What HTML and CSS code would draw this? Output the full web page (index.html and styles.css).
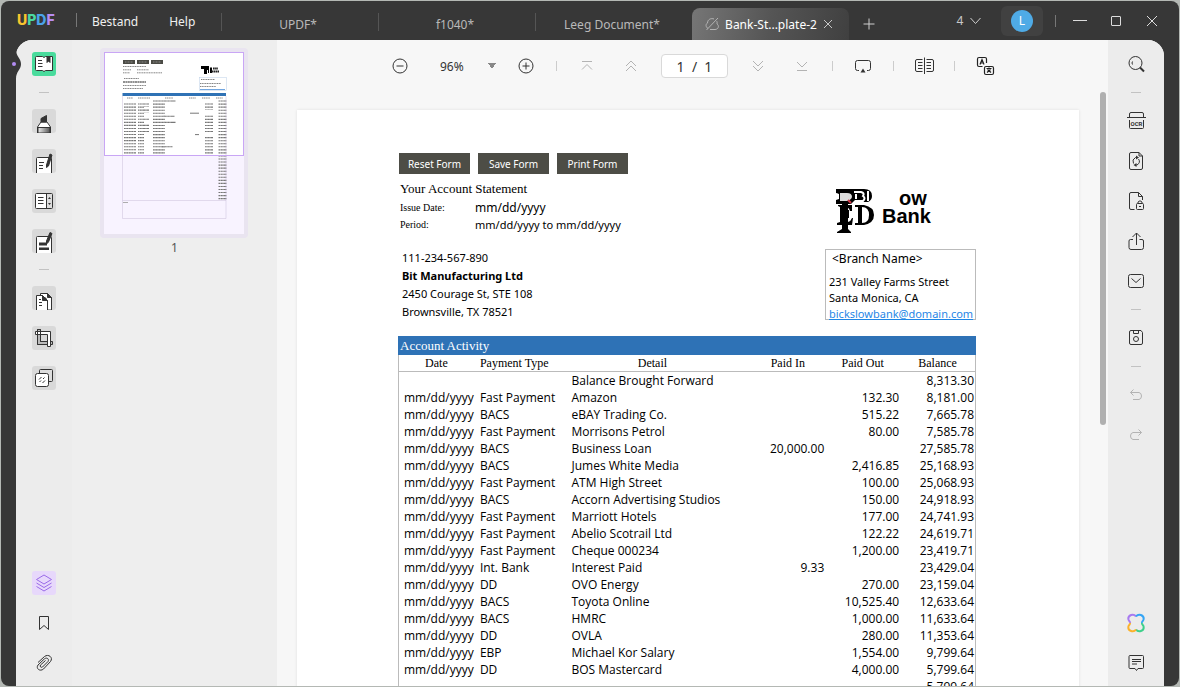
FILE: index.html
```html
<!DOCTYPE html>
<html lang="nl">
<head>
    <meta charset="UTF-8">
    <meta name="viewport" content="width=device-width, initial-scale=1.0">
    <title>UPDF - Bank-Statement-Template-2</title>
    <link rel="stylesheet" href="styles.css">
</head>
<body>
<div class="window">
    <header class="titlebar">
        <div class="logo"><span class="logo-u">U</span><span class="logo-p">P</span><span class="logo-d">D</span><span class="logo-f">F</span></div>
        <nav class="menu">
            <button type="button">Bestand</button>
            <button type="button">Help</button>
        </nav>
        <div class="tabs">
            <button type="button" class="tab">UPDF*</button>
            <button type="button" class="tab">f1040*</button>
            <button type="button" class="tab">Leeg Document*</button>
            <div class="tab active">
                <svg width="14" height="14" viewBox="0 0 14 14" fill="none" stroke="#b4b4b4"><path d="M3 11.500C.5 10 .5 7 2.500 6C2.500 2.500 6 .800 9 2M5 12.500H10C13.500 12.500 14.500 8.500 12 7C12.300 5.500 12 4.500 11.500 4M1.500 13L13 1"/></svg>
                <span>Bank-St...plate-2</span>
                <button type="button" class="tab-close" aria-label="Close tab"><svg width="10" height="10" viewBox="0 0 10 10" stroke="#c8c8c8"><path d="M1 1L9 9M9 1L1 9"/></svg></button>
            </div>
            <button type="button" class="tab-add" aria-label="New tab"><svg width="12" height="12" viewBox="0 0 12 12" stroke="#cfcfcf"><path d="M6 .5V11.500M.5 6H11.500"/></svg></button>
        </div>
        <div class="window-tools">
            <button type="button" class="tab-count">4 <svg width="11" height="8" viewBox="0 0 11 8" fill="none" stroke="#cfcfcf"><path d="M.5 1L5.500 6.500L10.500 1"/></svg></button>
            <button type="button" class="account"><span class="avatar">L</span></button>
            <span class="bar"></span>
            <button type="button" aria-label="Minimize"><svg width="14" height="14" viewBox="0 0 14 14" stroke="#dcdcdc"><path d="M0 6.500H14"/></svg></button>
            <button type="button" aria-label="Maximize"><svg width="14" height="14" viewBox="0 0 14 14" fill="none" stroke="#dcdcdc"><rect x="2.500" y="2.500" width="9" height="9" rx=".5"/></svg></button>
            <button type="button" aria-label="Close"><svg width="14" height="14" viewBox="0 0 14 14" stroke="#dcdcdc"><path d="M2 2L12 12M12 2L2 12"/></svg></button>
        </div>
    </header>

    <div class="workspace">
        <!-- Left tool rail -->
        <aside class="rail rail-left">
            <svg class="notch" width="14" height="30" viewBox="0 0 14 30"><path d="M6 0C6 8 11 9 11 15C11 21 6 22 6 30H0V0Z" fill="#373737"/><circle cx="4" cy="15" r="2" fill="#b38cf2"/></svg>
            <button type="button" class="tool current" aria-label="Reader">
                <svg viewBox="0 0 24 24"><path class="page" d="M4.500 4.500H10.500L12 5.500L13.500 4.500H20.500V18.500H13.500L12 19.500L10.500 18.500H4.500Q3.500 18.500 3.500 17.500V5.500Q3.500 4.500 4.500 4.500Z"/><path d="M6 8.500H10M6 11.500H10.500M6 14.500H10.500"/><path class="ink" d="M15 4.500H18V10.500L16.500 9L15 10.500Z"/></svg>
            </button>
            <span class="divider"></span>
            <button type="button" class="tool" aria-label="Comment">
                <svg viewBox="0 0 24 24"><defs><linearGradient id="tip"><stop offset="0" stop-color="#eee"/><stop offset="1" stop-color="#555"/></linearGradient></defs><path class="page" d="M9 13H15L18.500 18V24H5.500V18Z"/><path class="tip" d="M6 18.500H18V24H6Z"/><path class="ink" d="M9 13V9.500L14.500 6.500V13Z"/></svg>
            </button>
            <button type="button" class="tool" aria-label="Edit">
                <svg viewBox="0 0 24 24"><path class="page" d="M4.500 24V9.500Q4.500 8.500 5.500 8.500H18.500Q19.500 8.500 19.500 9.500V24"/><path d="M7 13.500H12M7 16.500H11M7 19.500H11"/><path class="ink" d="M18 5L20 6L16.500 17L14.500 18.500L14.500 16Z"/></svg>
            </button>
            <button type="button" class="tool" aria-label="Form">
                <svg viewBox="0 0 24 24"><rect class="page" x="3.500" y="4.500" width="17" height="15" rx="1"/><path d="M15 5H20V19H15Z" fill="#ddd" stroke="none"/><path d="M14.500 4.500V19.500M6 8.500H11.500M6 11.500H11.500M6 14.500H11.500"/><path class="fill" d="M16 10L17.500 8L19 10ZM16 14L17.500 16L19 14Z"/></svg>
            </button>
            <button type="button" class="tool" aria-label="Redact">
                <svg viewBox="0 0 24 24"><path class="page" d="M4.500 24V8.500Q4.500 7.500 5.500 7.500H18.500Q19.500 7.500 19.500 8.500V24"/><path class="fill" d="M7 13.500H15V16.500H7ZM7 18.500H17V21H7Z"/><path class="ink" d="M18 3.500L20 4.500L16.500 13L14.500 15L14.500 12Z"/></svg>
            </button>
            <span class="divider"></span>
            <button type="button" class="tool" aria-label="Organize pages">
                <svg viewBox="0 0 24 24"><path class="page" d="M8.500 12V7.500H15.500L19.500 11.500V24H14V12Z"/><path class="page" d="M4.500 24V9.500H10.500L15.500 14.500V24"/><path class="ink" d="M10.500 9.500V14.500H15.500ZM15.500 7.500V11.500H19.500Z"/><path d="M7 13.500H9M7 16.500H10M7 19.500H10"/></svg>
            </button>
            <button type="button" class="tool" aria-label="Crop">
                <svg viewBox="0 0 24 24"><path d="M5.500 3.500H8.500V15.500H20.500V18.500H5.500Z" fill="#bbb"/><path class="page" d="M3.500 5.500H18.500V20.500H15.500V8.500H3.500Z"/><path d="M5.500 3.500H8.500V15.500H15.500M5.500 3.500V18.500H15.500"/></svg>
            </button>
            <button type="button" class="tool" aria-label="Watermark">
                <svg viewBox="0 0 24 24"><rect x="7.500" y="3.500" width="13" height="12" rx="1" fill="#ddd"/><rect class="page" x="3.500" y="7.500" width="13" height="13" rx="2"/><path d="M7 13.500L9.500 11M7.500 16L9 14.500M11 13L12.500 11.500M10.500 17L13 14.500"/></svg>
            </button>
            <button type="button" class="tool layers push" aria-label="Layers">
                <svg viewBox="0 0 24 24"><path d="M12 4L19.500 8.500L12 13L4.500 8.500ZM4.500 12L12 16.500L19.500 12M4.500 15.500L12 20L19.500 15.500"/></svg>
            </button>
            <button type="button" class="tool plain" aria-label="Bookmarks">
                <svg viewBox="0 0 24 24"><path d="M7.500 5.500H16.500V18.500L12 14.500L7.500 18.500Z"/></svg>
            </button>
            <button type="button" class="tool plain" aria-label="Attachments">
                <svg viewBox="0 0 24 24"><path d="M6 11.500L12.500 5.500C16.500 2.500 21.500 6.500 18.500 10.500L11.500 18C8 21 3.500 17.500 6 14L12.500 7.800C15 6 17.500 8.200 16 10.500L10.500 16C9 17 7.500 15.500 8.500 14L13.500 9.500"/></svg>
            </button>
        </aside>

        <!-- Page thumbnails -->
        <aside class="thumbs">
            <a href="#page-1" class="thumb">
                <svg viewBox="0 0 140 182">
                    <rect width="140" height="182" fill="#f8f3ff"/>
                    <rect width="140" height="104" fill="#fff"/>
                    <path d="M19 10H31M33 10H45M47 10H59" stroke="#4b4b45" stroke-width="4"/>
                    <path d="M21 10H29M35 10H43M49 10H57" stroke="#999" stroke-width=".8" stroke-dasharray="1 .5"/>
                    <g stroke="#777" stroke-width=".9" stroke-dasharray="1.200 .5">
                        <path d="M19 14.500H42M19 17.800H27M33 17.800H45M19 20.800H26M33 20.800H58M20 26.500H35M19 33.500H42M19 36.500H39"/>
                        <path d="M97 27.500H111M96 31.500H117M96 34.500H112"/>
                    </g>
                    <path d="M19 30H42" stroke="#222" stroke-width="1.200" stroke-dasharray="2 .4"/>
                    <path d="M97 14H105V18H103V22H100V17H97ZM104 17H105V21H104ZM106 15.500H108V21H106Z"/>
                    <path d="M109 16.500H114M107.500 19.500H115" stroke="#222" stroke-width="2" stroke-dasharray="1.700 .4"/>
                    <rect x="95.500" y="25.500" width="27" height="13" fill="none" stroke="#bcd0e8" stroke-width=".5"/>
                    <path d="M96 37.500H121" stroke="#72a6e0"/>
                    <path d="M18.500 42.500H122" stroke="#2f72b5" stroke-width="3"/>
                    <path d="M23 46H29M34 46H46M61 46H69M85 46H92M98 46H106M112 46H119" stroke="#888" stroke-dasharray="1.300 .5"/>
                    <!-- one dash per table row -->
                    <g fill="none" stroke="#777" stroke-dasharray="1.100 1.950">
                        <path d="M26 51.500V104" stroke-width="12"/>
                        <path d="M37 51.500V104" stroke-width="6"/>
                        <path d="M42.500 51.500V55M42.500 57.600V61M42.500 66.750V68M42.500 72.850V82" stroke-width="5"/>
                        <path d="M55 48.500V104" stroke-width="12"/>
                        <path d="M66 48.500V51M65 63.750V66M66 69.850V72M63 94.250V97" stroke-width="11"/>
                        <path d="M105 51.500V58M105 63.750V82M105 85.100V104" stroke-width="8"/>
                        <path d="M118.500 48.500V149" stroke-width="8"/>
                    </g>
                    <path d="M86 61.200H95M91 82.600H95" stroke="#777"/>
                    <g stroke="#fff" stroke-width=".6" opacity=".7">
                        <path d="M22 51V104M24.500 51V104M27 51V104M29.500 51V104M35.500 51V104M38 51V104M42 51V104M51 48V104M54 48V104M57 48V104M60 48V104M63 48V104M66 48V104M103 51V104M106 51V104M116.500 48V149M119 48V149"/>
                    </g>
                    <path d="M18.500 44V166.500H122V44M18.500 148.500H122" fill="none" stroke="#cbbfd8" stroke-width=".5"/>
                    <path d="M19 150.500H24" stroke="#999" stroke-width=".8"/>
                    <rect x=".5" y=".5" width="139" height="103" fill="none" stroke="#c9a6f5"/>
                </svg>
            </a>
            <span class="thumb-number">1</span>
        </aside>

        <main class="viewer">
            <div class="toolbar">
                <button type="button" aria-label="Zoom out"><svg viewBox="0 0 24 24"><circle cx="12" cy="12" r="7"/><path d="M8.500 12H15.500"/></svg></button>
                <select class="zoom" aria-label="Zoom"><option>96%</option><option>100%</option></select>
                <button type="button" aria-label="Zoom in"><svg viewBox="0 0 24 24"><circle cx="12" cy="12" r="7"/><path d="M8.500 12H15.500M12 8.500V15.500"/></svg></button>
                <span class="sep"></span>
                <div class="page-nav">
                    <button type="button" class="faded" aria-label="First page"><svg viewBox="0 0 24 24"><path d="M7 7.500H17M7 15.500L12 10.500L17 15.500"/></svg></button>
                    <button type="button" class="faded" aria-label="Previous page"><svg viewBox="0 0 24 24"><path d="M7 12L12 7L17 12M7 17L12 12L17 17"/></svg></button>
                </div>
                <input class="page-input" type="text" value="1  /  1" aria-label="Page">
                <div class="page-nav">
                    <button type="button" class="faded" aria-label="Next page"><svg viewBox="0 0 24 24"><path d="M7 7L12 12L17 7M7 12L12 17L17 12"/></svg></button>
                    <button type="button" class="faded" aria-label="Last page"><svg viewBox="0 0 24 24"><path d="M7 8L12 13L17 8M7 16.500H17"/></svg></button>
                </div>
                <span class="sep"></span>
                <button type="button" aria-label="Slideshow"><svg viewBox="0 0 24 24"><path d="M8 16.500H6.500Q4.500 16.500 4.500 14.500V8.500Q4.500 6.500 6.500 6.500H17.500Q19.500 6.500 19.500 8.500V14.500Q19.500 16.500 17.500 16.500H16"/><path class="fill" d="M12 14.500L14.500 18.500H9.500Z"/></svg></button>
                <span class="sep"></span>
                <button type="button" aria-label="Page display"><svg viewBox="0 0 24 24"><path d="M10.500 5.500H5Q3.500 5.500 3.500 7V16Q3.500 17.500 5 17.500H10.500M14.500 5.500H20Q21.500 5.500 21.500 7V16Q21.500 17.500 20 17.500H14.500M12.500 3.500V20M6 8.500H10.500M6 11.500H10.500M6 14.500H10.500M14.500 8.500H19M14.500 11.500H19M14.500 14.500H19"/></svg></button>
                <span class="sep"></span>
                <button type="button" aria-label="Translate"><svg viewBox="0 0 24 24" class="bold"><path d="M9.500 12.500H6Q4.500 12.500 4.500 11V5Q4.500 3.500 6 3.500H12Q13.500 3.500 13.500 5V9"/><rect x="11.500" y="12.500" width="9" height="8" rx="1.500"/><path d="M7 10.500L9 5.500L11 10.500M7.500 9H10.500M13.500 14.500H18.500M16 13.500V14.500M14.500 15.500L18 18.500M17.500 15.500L14 18.500"/></svg></button>
            </div>

            <div class="scroller">
                <span class="scroll-thumb"></span>
                <article class="sheet" id="page-1">
                    <div class="statement-head">
                        <div class="customer">
                            <div class="form-buttons">
                                <button type="button">Reset Form</button>
                                <button type="button">Save Form</button>
                                <button type="button">Print Form</button>
                            </div>
                            <h1>Your Account Statement</h1>
                            <dl>
                                <dt>Issue Date:</dt><dd class="issue">mm/dd/yyyy</dd>
                                <dt>Period:</dt><dd>mm/dd/yyyy to mm/dd/yyyy</dd>
                            </dl>
                            <address>
                                111-234-567-890<br>
                                <b>Bit Manufacturing Ltd</b><br>
                                2450 Courage St, STE 108<br>
                                Brownsville, TX 78521
                            </address>
                        </div>
                        <div class="bank">
                            <div class="bank-logo">
                                <svg width="42" height="48" viewBox="0 0 42 48"><path d="M1 2H29Q37 2 37 9Q37 13 33 15H25V13H20L16 17H1V13L4 12V7Q2 6 1 6Z"/><path d="M5 6H12Q17 6 17 10Q16 13 12 14H5Z" fill="#ddd"/><path d="M19 5H26Q30 6 28 9Q31 11 28 14H20M21 7V12M33 4V14" fill="none" stroke="#fff" stroke-width="2"/><path d="M13 13L16 16" stroke="#d33a4a" stroke-width="2"/><path d="M7 16H13V42L16 45V46H2V45L7 42ZM3 18H17V24H15Q14 20 10 20H8V26H12V23H14V31H12V28H8V35H13Q16 34 17 31H18L17 38H2V36L5 35V20L3 19Z"/><path fill-rule="evenodd" d="M20 18H29Q39 20 39 28Q39 36 29 38H20V36H23V20H20ZM27 20V36Q34 36 34 28Q34 20 27 20Z"/></svg>
                                <div class="bank-name"><span>ow</span><br>Bank</div>
                            </div>
                            <div class="branch">
                                <p class="branch-name">&lt;Branch Name&gt;</p>
                                <p>231 Valley Farms Street</p>
                                <p>Santa Monica, CA</p>
                                <p><a href="mailto:bickslowbank@domain.com">bickslowbank@domain.com</a></p>
                            </div>
                        </div>
                    </div>

                    <table>
                        <caption>Account Activity</caption>
                        <colgroup><col class="c-date"><col class="c-type"><col class="c-detail"><col class="c-in"><col class="c-out"><col class="c-balance"></colgroup>
                        <thead>
                            <tr><th>Date</th><th>Payment Type</th><th>Detail</th><th>Paid In</th><th>Paid Out</th><th>Balance</th></tr>
                        </thead>
                        <tbody>
                            <tr><td></td><td></td><td>Balance Brought Forward</td><td></td><td></td><td>8,313.30</td></tr>
                            <tr><td>mm/dd/yyyy</td><td>Fast Payment</td><td>Amazon</td><td></td><td>132.30</td><td>8,181.00</td></tr>
                            <tr><td>mm/dd/yyyy</td><td>BACS</td><td>eBAY Trading Co.</td><td></td><td>515.22</td><td>7,665.78</td></tr>
                            <tr><td>mm/dd/yyyy</td><td>Fast Payment</td><td>Morrisons Petrol</td><td></td><td>80.00</td><td>7,585.78</td></tr>
                            <tr><td>mm/dd/yyyy</td><td>BACS</td><td>Business Loan</td><td>20,000.00</td><td></td><td>27,585.78</td></tr>
                            <tr><td>mm/dd/yyyy</td><td>BACS</td><td>Jumes White Media</td><td></td><td>2,416.85</td><td>25,168.93</td></tr>
                            <tr><td>mm/dd/yyyy</td><td>Fast Payment</td><td>ATM High Street</td><td></td><td>100.00</td><td>25,068.93</td></tr>
                            <tr><td>mm/dd/yyyy</td><td>BACS</td><td>Accorn Advertising Studios</td><td></td><td>150.00</td><td>24,918.93</td></tr>
                            <tr><td>mm/dd/yyyy</td><td>Fast Payment</td><td>Marriott Hotels</td><td></td><td>177.00</td><td>24,741.93</td></tr>
                            <tr><td>mm/dd/yyyy</td><td>Fast Payment</td><td>Abelio Scotrail Ltd</td><td></td><td>122.22</td><td>24,619.71</td></tr>
                            <tr><td>mm/dd/yyyy</td><td>Fast Payment</td><td>Cheque 000234</td><td></td><td>1,200.00</td><td>23,419.71</td></tr>
                            <tr><td>mm/dd/yyyy</td><td>Int. Bank</td><td>Interest Paid</td><td>9.33</td><td></td><td>23,429.04</td></tr>
                            <tr><td>mm/dd/yyyy</td><td>DD</td><td>OVO Energy</td><td></td><td>270.00</td><td>23,159.04</td></tr>
                            <tr><td>mm/dd/yyyy</td><td>BACS</td><td>Toyota Online</td><td></td><td>10,525.40</td><td>12,633.64</td></tr>
                            <tr><td>mm/dd/yyyy</td><td>BACS</td><td>HMRC</td><td></td><td>1,000.00</td><td>11,633.64</td></tr>
                            <tr><td>mm/dd/yyyy</td><td>DD</td><td>OVLA</td><td></td><td>280.00</td><td>11,353.64</td></tr>
                            <tr><td>mm/dd/yyyy</td><td>EBP</td><td>Michael Kor Salary</td><td></td><td>1,554.00</td><td>9,799.64</td></tr>
                            <tr><td>mm/dd/yyyy</td><td>DD</td><td>BOS Mastercard</td><td></td><td>4,000.00</td><td>5,799.64</td></tr>
                            <tr><td></td><td></td><td></td><td></td><td></td><td>5,799.64</td></tr>
                        </tbody>
                    </table>
                </article>
            </div>
        </main>

        <!-- Right tool rail -->
        <aside class="rail rail-right">
            <button type="button" class="tool plain" aria-label="Search">
                <svg viewBox="0 0 24 24"><circle cx="11.500" cy="11" r="6.500"/><path d="M8.500 9.500Q7.500 11 8.500 12.500"/><path d="M16 15.500L20 19.500" stroke-width="2"/></svg>
            </button>
            <span class="divider"></span>
            <button type="button" class="tool plain" aria-label="OCR">
                <svg viewBox="0 0 24 24"><path d="M5.500 8V5Q5.500 3.500 7 3.500H18Q19.500 3.500 19.500 5V8M3 8.500H22M5.500 11V18.500Q5.500 19.500 6.500 19.500H18.500Q19.500 19.500 19.500 18.500V11"/><text x="12.500" y="17" text-anchor="middle">OCR</text></svg>
            </button>
            <button type="button" class="tool plain" aria-label="Convert">
                <svg viewBox="0 0 24 24"><path d="M15 3.500H7Q5.500 3.500 5.500 5V19Q5.500 20.500 7 20.500H17Q18.500 20.500 18.500 19V7ZV7H18.500"/><path d="M9.500 14.500Q7.500 10.500 11.500 8.500H13M14.500 10Q17 13.500 13 16H11"/><path class="fill" d="M12 6.500L15 8.500L12 10.500ZM12.500 14L9.500 16L12.500 18Z"/></svg>
            </button>
            <button type="button" class="tool plain" aria-label="Protect">
                <svg viewBox="0 0 24 24"><path d="M10.500 20.500H7Q5.500 20.500 5.500 19V5Q5.500 3.500 7 3.500H14.500L18.500 7.500V11M14.500 3.500V7.500H18.500"/><rect x="12.500" y="14.500" width="7" height="6" rx="1"/><path d="M14 14.500V13Q16 10.500 18 13V14.500M15 17.500H17"/></svg>
            </button>
            <button type="button" class="tool plain" aria-label="Share">
                <svg viewBox="0 0 24 24"><path d="M9 10.500H6.500Q5 10.500 5 12V18.500Q5 20.500 7 20.500H17.500Q19.500 20.500 19.500 18.500V12Q19.500 10.500 18 10.500H15.500M12.500 16V4M8.500 8L12.500 4L16.500 8"/></svg>
            </button>
            <button type="button" class="tool plain" aria-label="Mail">
                <svg viewBox="0 0 24 24"><rect x="4.500" y="5.500" width="15" height="13" rx="2"/><path d="M7.500 9.500L12 13.500L16.500 9.500"/></svg>
            </button>
            <span class="divider"></span>
            <button type="button" class="tool plain" aria-label="Save">
                <svg viewBox="0 0 24 24"><path d="M7 4.500H17L18.500 6.500V17Q18.500 18.500 17 18.500H7Q5.500 18.500 5.500 17V6Q5.500 4.500 7 4.500ZM9.500 4.500V7.500H14.500V4.500"/><circle cx="12" cy="13" r="2.500"/></svg>
            </button>
            <span class="divider"></span>
            <button type="button" class="tool plain faded" aria-label="Undo">
                <svg viewBox="0 0 24 24"><path d="M9.500 6.500L6.500 9.500L9.500 12.500M6.500 9.500H15Q17.500 10 17.500 13Q17.500 16 15 16.500H9"/></svg>
            </button>
            <button type="button" class="tool plain faded" aria-label="Redo">
                <svg viewBox="0 0 24 24"><path d="M14.500 6.500L17.500 9.500L14.500 12.500M17.500 9.500H9Q6.500 10 6.500 13Q6.500 16 9 16.500H15"/></svg>
            </button>
            <button type="button" class="tool plain push" aria-label="UPDF AI">
                <svg viewBox="0 0 24 24" stroke-width="2"><path d="M12 5.500C9.500 2 4 4 4.300 8C4.500 10 6.500 10.500 6 12" stroke="#a87bf0"/><path d="M12 5.500C14.500 2 20 4 19.700 8C19.500 10 17.500 10.500 18 12" stroke="#35a5f5"/><path d="M18 12C17.500 13.500 19.500 14 19.700 16C20 20 14.500 22 12 18.500" stroke="#3ed08b"/><path d="M6 12C6.500 13.500 4.500 14 4.300 16C4 20 9.500 22 12 18.500" stroke="#fbb22c"/></svg>
            </button>
            <button type="button" class="tool plain" aria-label="Comments">
                <svg viewBox="0 0 24 24"><path d="M6 4.500H18.500Q19.500 4.500 19.500 5.500V16.500Q19.500 17.500 18.500 17.500H14L12.500 19.500L11 17.500H6Q5 17.500 5 16.500V5.500Q5 4.500 6 4.500ZM8 8.500H17M8 10.500H17M8 13H13"/></svg>
            </button>
        </aside>
    </div>
</div>
</body>
</html>
```
FILE: styles.css
```css
* {
    box-sizing: border-box;
}

body {
    margin: 0;
    height: 100vh;
    padding: 1px;
    background-color: #b4b8b4;
    font-family: "Noto Sans", "Open Sans", sans-serif;
    font-size: 12px;
    color: #222;
}

button {
    display: flex;
    align-items: center;
    justify-content: center;
    padding: 0;
    border: none;
    background: none;
    font: inherit;
    color: inherit;
    cursor: pointer;
}

.window {
    display: flex;
    flex-direction: column;
    height: 100%;
    background-color: #373737;
    border-radius: 8px;
    overflow: hidden;
}

/* Title bar */
.titlebar {
    display: flex;
    flex: none;
    height: 39px;
    padding-left: 16px;
    color: #f0f0f0;
}

.logo {
    width: 60px;
    height: 24px;
    margin-top: 7px;
    border-right: 1px solid #666;
    border-image: linear-gradient(transparent 25%, #777 25%, #777 75%, transparent 75%) 1;
    font: 800 14px/24px Inter, sans-serif;
}

.logo-u { color: #f7c52f; }
.logo-p { color: #4bd8a0; }
.logo-d { color: #4aa3ea; }
.logo-f { color: #b78cf3; }

.menu {
    display: flex;
    gap: 31px;
    width: 144px;
    padding: 2px 0 0 15px;
}

.tabs {
    display: flex;
    flex: 1;
    align-items: flex-end;
}

.tab {
    display: flex;
    align-items: center;
    justify-content: center;
    gap: 6px;
    width: 157px;
    height: 32px;
    padding-right: 3px;
    background: linear-gradient(#555, #555) left 5px / 1px 18px no-repeat;
    color: #b9b9b9;
}

.tab.active {
    border-radius: 8px 8px 0 0;
    background: linear-gradient(100deg, #767676, #555 50%, #404040);
    color: #fff;
}

.tab-close {
    width: 10px;
    height: 10px;
}

.tab-add {
    width: 40px;
    height: 32px;
}

.window-tools {
    display: flex;
    align-items: center;
    padding-right: 9px;
}

.window-tools button {
    width: 36px;
    height: 30px;
}

.window-tools .tab-count {
    gap: 7px;
    width: 48px;
    margin-right: 8px;
    color: #c8c8c8;
}

.window-tools .account {
    width: 42px;
    border-radius: 6px;
    background-color: #414141;
}

.avatar {
    width: 22px;
    border-radius: 50%;
    background-color: #4fabe6;
    line-height: 22px;
    color: #fff;
}

.bar {
    width: 1px;
    height: 12px;
    margin: 0 6px 0 12px;
    background-color: #777;
}

/* Work area */
.workspace {
    display: flex;
    flex: 1;
    min-height: 0;
    margin: 0 15px;
    border-radius: 16px 16px 0 0;
    background-color: #eee;
}

.rail {
    position: relative;
    display: flex;
    flex: none;
    flex-direction: column;
    align-items: center;
    gap: 16px;
    width: 56px;
    padding: 12px 0 11px;
    background-color: #ececec;
}

.rail-left {
    border-top-left-radius: 16px;
}

.rail-right {
    border-top-right-radius: 16px;
}

.notch {
    position: absolute;
    top: 9px;
    left: -6px;
}

.divider {
    width: 10px;
    height: 1px;
    background-color: #c2c2c2;
}

.tool {
    flex: none;
    width: 24px;
    height: 24px;
    border-radius: 3px;
    background-color: #d9d9d9;
}

.tool svg, .toolbar svg {
    display: block;
    width: 24px;
    height: 24px;
    fill: none;
    stroke: #333;
}

.tool text {
    fill: #333;
    stroke: none;
    font: bold 6px Roboto, sans-serif;
}

.tool .page { fill: #fff; }
.tool .ink { fill: #333; }
.tool .tip { fill: url(#tip); }
.tool .fill, .toolbar .fill { fill: #333; stroke: none; }
.toolbar .bold { stroke: #222; stroke-width: 1.2; }
.tool.current { background-color: #49db9c; }
.tool.plain { background: none; }
.tool.layers { background-color: #e7d8fb; }
.tool.layers svg { stroke: #9a6be8; }
.tool.faded svg, .toolbar .faded svg { stroke: #b3b3b3; }
.push { margin-top: auto; }

/* Thumbnails */
.thumbs {
    flex: none;
    width: 205px;
    padding: 8px 28px;
    text-align: center;
}

.thumb {
    display: block;
    width: 148px;
    padding: 4px;
    border-radius: 4px;
    background-color: #e9e4f0;
}

.thumb svg {
    display: block;
}

.thumb-number {
    color: #555;
    line-height: 20px;
}

/* Viewer */
.viewer {
    display: flex;
    flex: 1;
    flex-direction: column;
    min-width: 0;
    background-color: #f7f7f7;
}

.toolbar {
    display: flex;
    flex: none;
    align-items: center;
    justify-content: center;
    gap: 18px;
    height: 52px;
}

.page-nav {
    display: flex;
    gap: 20px;
}

.zoom {
    width: 66px;
    padding: 0 10px;
    border: none;
    background: linear-gradient(to bottom right, #888 50%, transparent 50%) right / 4px 6px no-repeat, linear-gradient(to bottom left, #888 50%, transparent 50%) right 4px center / 4px 6px no-repeat;
    appearance: none;
    font: inherit;
    color: #333;
}

.sep {
    width: 1px;
    height: 10px;
    background-color: #ccc;
}

.page-input {
    width: 67px;
    height: 24px;
    border: 1px solid #d9d9d9;
    border-radius: 4px;
    background-color: #fff;
    font: 14px "Noto Sans", sans-serif;
    text-align: center;
    color: #333;
}

.scroller {
    position: relative;
    flex: 1;
    min-height: 0;
    padding: 18px 29px 0 20px;
    overflow: hidden;
}

.scroll-thumb {
    position: absolute;
    top: 0;
    right: 2px;
    width: 6px;
    height: 56%;
    border-radius: 3px;
    background-color: #b0b0b0;
}

.sheet {
    min-height: 100%;
    padding: 43px 103px 0 101px;
    background-color: #fff;
    box-shadow: 0 0 3px rgba(0, 0, 0, 0.1);
    color: #000;
}

/* Statement */
.statement-head {
    display: flex;
    justify-content: space-between;
    height: 183px;
}

.form-buttons {
    display: flex;
    gap: 8px;
    padding-left: 1px;
}

.form-buttons button {
    width: 71px;
    height: 21px;
    background-color: #4d4d46;
    font-size: 10px;
    color: #fff;
}

h1 {
    margin: 5px 0 0 2px;
    font: 13px/20px "Liberation Serif", serif;
}

dl {
    display: grid;
    grid-template-columns: 75px auto;
    margin: 0 0 16px 2px;
    line-height: 17px;
}

dt {
    font: 10px/17px "Liberation Serif", serif;
}

dd {
    margin: 0;
    font-size: 11px;
}

dd.issue {
    font-size: 12px;
}

address {
    margin-left: 4px;
    font-size: 11px;
    font-style: normal;
    line-height: 18px;
}

.bank {
    width: 151px;
    padding-top: 34px;
}

.bank-logo {
    display: flex;
    gap: 5px;
    height: 62px;
    padding-left: 10px;
}

.bank-name {
    padding-top: 2px;
    font: bold 20px/18px "Liberation Sans", sans-serif;
}

.bank-name span {
    padding-left: 17px;
}

.branch {
    height: 71px;
    padding: 0 3px;
    border: 1px solid #bbb;
    font-size: 11px;
    line-height: 16px;
}

.branch p {
    margin: 0;
}

.branch .branch-name {
    margin: 0 0 6px 3px;
    font-size: 12px;
    line-height: 18px;
}

.branch a {
    color: #1f86e6;
}

table {
    width: 100%;
    border: 1px solid #bbb;
    border-top: none;
    border-spacing: 0;
    table-layout: fixed;
}

caption {
    padding-left: 2px;
    background-color: #2e72b6;
    font: 13px/19px "Liberation Serif", serif;
    text-align: left;
    color: #fff;
}

.c-date, .c-in, .c-out, .c-balance { width: 13%; }
.c-type { width: 14%; }

th {
    height: 17px;
    padding: 0;
    border-bottom: 1px solid #bbb;
    font: 12px/16px "Liberation Serif", serif;
}

td {
    height: 17px;
    padding: 0 1px 0 5px;
    font-family: "Open Sans", "Noto Sans", sans-serif;
    line-height: 17px;
    white-space: nowrap;
}

td:nth-child(2) {
    padding-left: 6px;
}

td:nth-child(3) {
    padding-left: 17px;
}

td:nth-child(n+4) {
    padding-left: 0;
    text-align: right;
}
```
